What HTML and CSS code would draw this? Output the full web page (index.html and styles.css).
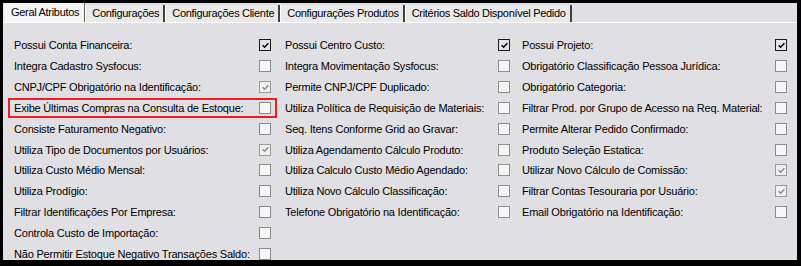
FILE: index.html
```html
<!DOCTYPE html>
<html lang="pt-BR">
<head>
    <meta charset="UTF-8">
    <meta name="viewport" content="width=device-width, initial-scale=1.0">
    <title>Geral Atributos</title>
    <link rel="stylesheet" href="styles.css">
</head>
<body>
    <div class="window">
        <div class="tabs">
            <div class="tab active">Geral Atributos</div>
            <div class="tab">Configurações</div>
            <div class="tab">Configurações Cliente</div>
            <div class="tab">Configurações Produtos</div>
            <div class="tab">Critérios Saldo Disponível Pedido</div>
        </div>
        <div class="panel">
            <div class="col col-a">
                <div class="item"><span>Possui Conta Financeira:</span><span class="box on"><svg viewBox="0 0 11 11"><path d="M2 5.2 L4.4 7.6 L9 2.8"/></svg></span></div>
                <div class="item"><span>Integra Cadastro Sysfocus:</span><span class="box"></span></div>
                <div class="item"><span>CNPJ/CPF Obrigatório na Identificação:</span><span class="box dim"><svg viewBox="0 0 11 11"><path d="M2 5.2 L4.4 7.6 L9 2.8"/></svg></span></div>
                <div class="item marked"><span>Exibe Últimas Compras na Consulta de Estoque:</span><span class="box"></span></div>
                <div class="item"><span>Consiste Faturamento Negativo:</span><span class="box"></span></div>
                <div class="item"><span>Utiliza Tipo de Documentos por Usuários:</span><span class="box dim"><svg viewBox="0 0 11 11"><path d="M2 5.2 L4.4 7.6 L9 2.8"/></svg></span></div>
                <div class="item"><span>Utiliza Custo Médio Mensal:</span><span class="box"></span></div>
                <div class="item"><span>Utiliza Prodígio:</span><span class="box"></span></div>
                <div class="item"><span>Filtrar Identificações Por Empresa:</span><span class="box"></span></div>
                <div class="item"><span>Controla Custo de Importação:</span><span class="box"></span></div>
                <div class="item"><span>Não Permitir Estoque Negativo Transações Saldo:</span><span class="box"></span></div>
            </div>
            <div class="col col-b">
                <div class="item"><span>Possui Centro Custo:</span><span class="box on"><svg viewBox="0 0 11 11"><path d="M2 5.2 L4.4 7.6 L9 2.8"/></svg></span></div>
                <div class="item"><span>Integra Movimentação Sysfocus:</span><span class="box"></span></div>
                <div class="item"><span>Permite CNPJ/CPF Duplicado:</span><span class="box"></span></div>
                <div class="item"><span>Utiliza Política de Requisição de Materiais:</span><span class="box"></span></div>
                <div class="item"><span>Seq. Itens Conforme Grid ao Gravar:</span><span class="box"></span></div>
                <div class="item"><span>Utiliza Agendamento Cálculo Produto:</span><span class="box"></span></div>
                <div class="item"><span>Utiliza Calculo Custo Médio Agendado:</span><span class="box"></span></div>
                <div class="item"><span>Utiliza Novo Cálculo Classificação:</span><span class="box"></span></div>
                <div class="item"><span>Telefone Obrigatório na Identificação:</span><span class="box"></span></div>
            </div>
            <div class="col col-c">
                <div class="item"><span>Possui Projeto:</span><span class="box on"><svg viewBox="0 0 11 11"><path d="M2 5.2 L4.4 7.6 L9 2.8"/></svg></span></div>
                <div class="item"><span>Obrigatório Classificação Pessoa Jurídica:</span><span class="box"></span></div>
                <div class="item"><span>Obrigatório Categoria:</span><span class="box"></span></div>
                <div class="item"><span>Filtrar Prod. por Grupo de Acesso na Req. Material:</span><span class="box"></span></div>
                <div class="item"><span>Permite Alterar Pedido Confirmado:</span><span class="box"></span></div>
                <div class="item"><span>Produto Seleção Estatica:</span><span class="box"></span></div>
                <div class="item"><span>Utilizar Novo Cálculo de Comissão:</span><span class="box dim"><svg viewBox="0 0 11 11"><path d="M2 5.2 L4.4 7.6 L9 2.8"/></svg></span></div>
                <div class="item"><span>Filtrar Contas Tesouraria por Usuário:</span><span class="box dim"><svg viewBox="0 0 11 11"><path d="M2 5.2 L4.4 7.6 L9 2.8"/></svg></span></div>
                <div class="item"><span>Email Obrigatório na Identificação:</span><span class="box"></span></div>
            </div>
        </div>
    </div>
</body>
</html>
```
FILE: styles.css
```css
body {
    margin: 0;
    background: #000;
    font-family: "Liberation Sans", Arial, sans-serif;
    font-size: 11px;
    letter-spacing: -0.2px;
    color: #000;
}

.window {
    width: 794px;
    height: 257px;
    margin: 3px 0 0 3px;
    background: #e0dfe3;
    display: flex;
    flex-direction: column;
}

.tabs {
    display: flex;
    height: 19px;
    align-items: flex-end;
    padding-left: 1px;
    letter-spacing: -0.3px;
}

.tab {
    height: 17px;
    line-height: 17px;
    padding: 0 4px 0 6px;
    background: #e9e9ea;
    border-left: 1px solid #ffffff;
    border-right: 2px solid #404040;
    box-sizing: border-box;
    white-space: nowrap;
}

.tab.active {
    height: 19px;
    line-height: 19px;
    padding: 0 5px 0 7px;
    background: #f4f4f4;
    border-left: none;
    border-right: 1px solid #606060;
}

.panel {
    flex: 1;
    border-top: 1px solid #ffffff;
    display: flex;
    padding: 12px 0 0 5px;
}

.col {
    display: flex;
    flex-direction: column;
}

.col-a {
    width: 269px;
    margin-right: 2px;
}

.col-b {
    width: 237px;
}

.col-c {
    width: 277px;
}

.item {
    height: 20.85px;
    display: flex;
    align-items: center;
    justify-content: space-between;
    padding: 0 6px;
    box-sizing: border-box;
    white-space: nowrap;
}

/* destaque em vermelho */
.item.marked {
    border: 2px solid #ee1c24;
    padding: 0 4px;
}

.box {
    width: 12px;
    height: 12px;
    box-sizing: border-box;
    border: 1px solid #8c8c8c;
    background: #f6f6f6;
    display: flex;
    align-items: center;
    justify-content: center;
}

.box svg {
    width: 9px;
    height: 9px;
}

.box path {
    fill: none;
    stroke: #000;
    stroke-width: 1.8;
}

.box.on {
    border-color: #1a1a1a;
    background: #e4e4e4;
}

.box.dim {
    border-color: #9a9a9a;
    background: #efefef;
}

.box.dim path {
    stroke: #8a8a8a;
}
```
